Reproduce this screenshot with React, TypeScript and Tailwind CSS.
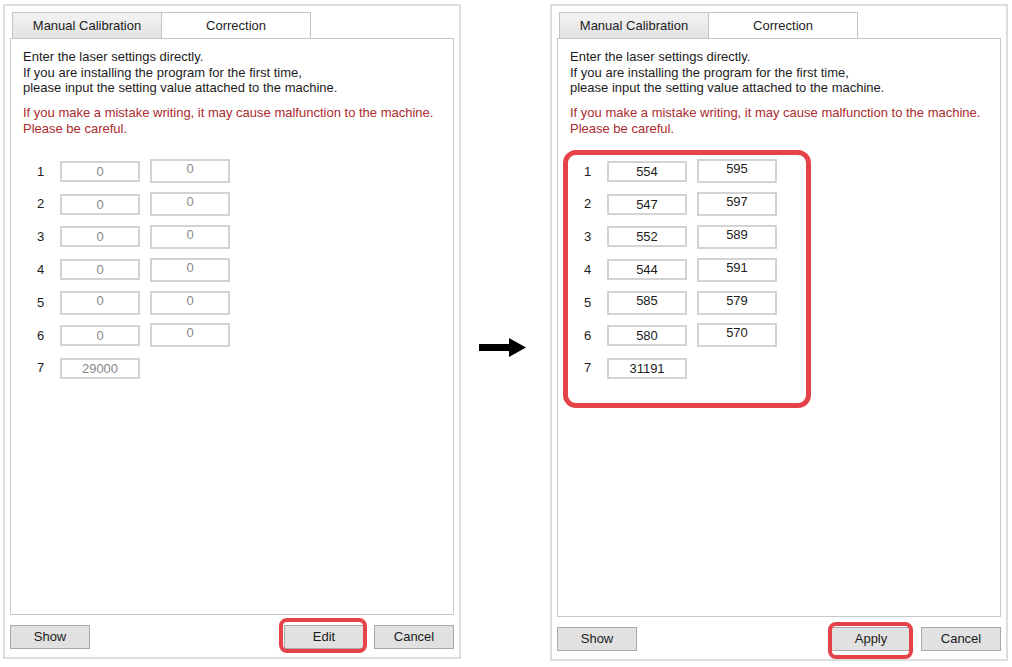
import React from "react";

type Row = { label: string; a: string; b?: string; tallA?: boolean };

const FONT = { fontFamily: '"Liberation Sans", Arial, sans-serif' };

function Field({ value, tall, muted }: { value: string; tall?: boolean; muted?: boolean }) {
  return (
    <div
      className={
        "w-[80px] border-2 border-[#d3d3d3] bg-white text-center text-[13px] leading-[15px] " +
        (tall ? "h-[24px] pt-0" : "h-[21px] pt-[1px]") +
        (muted ? " text-[#8a8a8a]" : " text-[#1c1c1c]")
      }
    >
      {value}
    </div>
  );
}

function Button({ label }: { label: string }) {
  return (
    <div className="flex h-[24px] w-[80px] items-center justify-center border border-[#a9a9a9] bg-[#e1e1e1] text-[13px] text-[#1c1c1c]">
      {label}
    </div>
  );
}

function Panel({
  heightClass,
  rows,
  muted,
  action,
  markRows,
  actionRing,
}: {
  heightClass: string;
  rows: Row[];
  muted: boolean;
  action: string;
  markRows: boolean;
  actionRing: string;
}) {
  return (
    <div className={"flex w-[458px] flex-col border-2 border-[#dedede] bg-white px-[5px] pt-[6px] pb-[8px] " + heightClass}>
      {/* tab strip */}
      <div className="flex h-[26px] pl-[2px]">
        <div className="flex w-[150px] items-center justify-center border border-b-0 border-[#c4c4c4] bg-gradient-to-b from-[#f3f3f3] to-[#e3e3e3] pt-[1px] text-[13px] text-[#1c1c1c]">
          Manual Calibration
        </div>
        <div className="flex w-[149px] items-start justify-center border border-b-0 border-l-0 border-[#c4c4c4] bg-white pt-[3px] text-[13px] text-[#1c1c1c]">
          Correction
        </div>
      </div>

      {/* tab page */}
      <div className="relative flex-1 border border-[#c8c8c8] bg-white">
        <div className="pl-[12px] pt-[10px] text-[13px] leading-[15.5px] text-[#1c1c1c]">
          <p>Enter the laser settings directly.</p>
          <p>If you are installing the program for the first time,</p>
          <p>please input the setting value attached to the machine.</p>
        </div>
        <div className="mt-[9.5px] pl-[12px] text-[13px] leading-[15.5px] text-[#ab2b2e]">
          <p>If you make a mistake writing, it may cause malfunction to the machine.</p>
          <p>Please be careful.</p>
        </div>

        <div className="mt-[19px] pl-[26px]">
          {rows.map((r) => (
            <div key={r.label} className="flex h-[32.8px] items-center">
              <div className="w-[23px] text-[13px] text-[#1c1c1c]">{r.label}</div>
              <Field value={r.a} tall={r.tallA} muted={muted} />
              {r.b !== undefined && (
                <div className="ml-[10px]">
                  <Field value={r.b} tall muted={muted} />
                </div>
              )}
            </div>
          ))}
        </div>

        {markRows && (
          <div className="pointer-events-none absolute left-[5px] top-[111px] h-[258px] w-[248px] rounded-[13px] border-[5px] border-[#e6424a]" />
        )}
      </div>

      {/* buttons */}
      <div className="mt-[10px] flex items-center justify-between">
        <Button label="Show" />
        <div className="flex gap-[10px]">
          <div className="relative">
            <Button label={action} />
            <div className={"pointer-events-none absolute rounded-[8px] border-[4px] border-[#e6424a] " + actionRing} />
          </div>
          <Button label="Cancel" />
        </div>
      </div>
    </div>
  );
}

const before: Row[] = [
  { label: "1", a: "0", b: "0" },
  { label: "2", a: "0", b: "0" },
  { label: "3", a: "0", b: "0" },
  { label: "4", a: "0", b: "0" },
  { label: "5", a: "0", b: "0", tallA: true },
  { label: "6", a: "0", b: "0" },
  { label: "7", a: "29000" },
];

const after: Row[] = [
  { label: "1", a: "554", b: "595" },
  { label: "2", a: "547", b: "597" },
  { label: "3", a: "552", b: "589" },
  { label: "4", a: "544", b: "591" },
  { label: "5", a: "585", b: "579", tallA: true },
  { label: "6", a: "580", b: "570" },
  { label: "7", a: "31191" },
];

export default function App() {
  return (
    <div className="flex h-[667px] w-[1012px] items-start bg-white pl-[3px] pt-[4px]" style={FONT}>
      <Panel
        heightClass="h-[655px]"
        rows={before}
        muted
        action="Edit"
        markRows={false}
        actionRing="-left-[5px] -top-[7px] h-[35px] w-[88px]"
      />

      <div className="flex w-[89px] pl-[18px] pt-[334px]">
        <svg width="47" height="19" viewBox="0 0 47 19">
          <rect x="0" y="6" width="31" height="7" fill="#000" />
          <polygon points="30,0 47,9.5 30,19" fill="#000" />
        </svg>
      </div>

      <Panel
        heightClass="h-[657px]"
        rows={after}
        muted={false}
        action="Apply"
        markRows
        actionRing="-left-[3px] -top-[5px] h-[37px] w-[85px]"
      />
    </div>
  );
}
